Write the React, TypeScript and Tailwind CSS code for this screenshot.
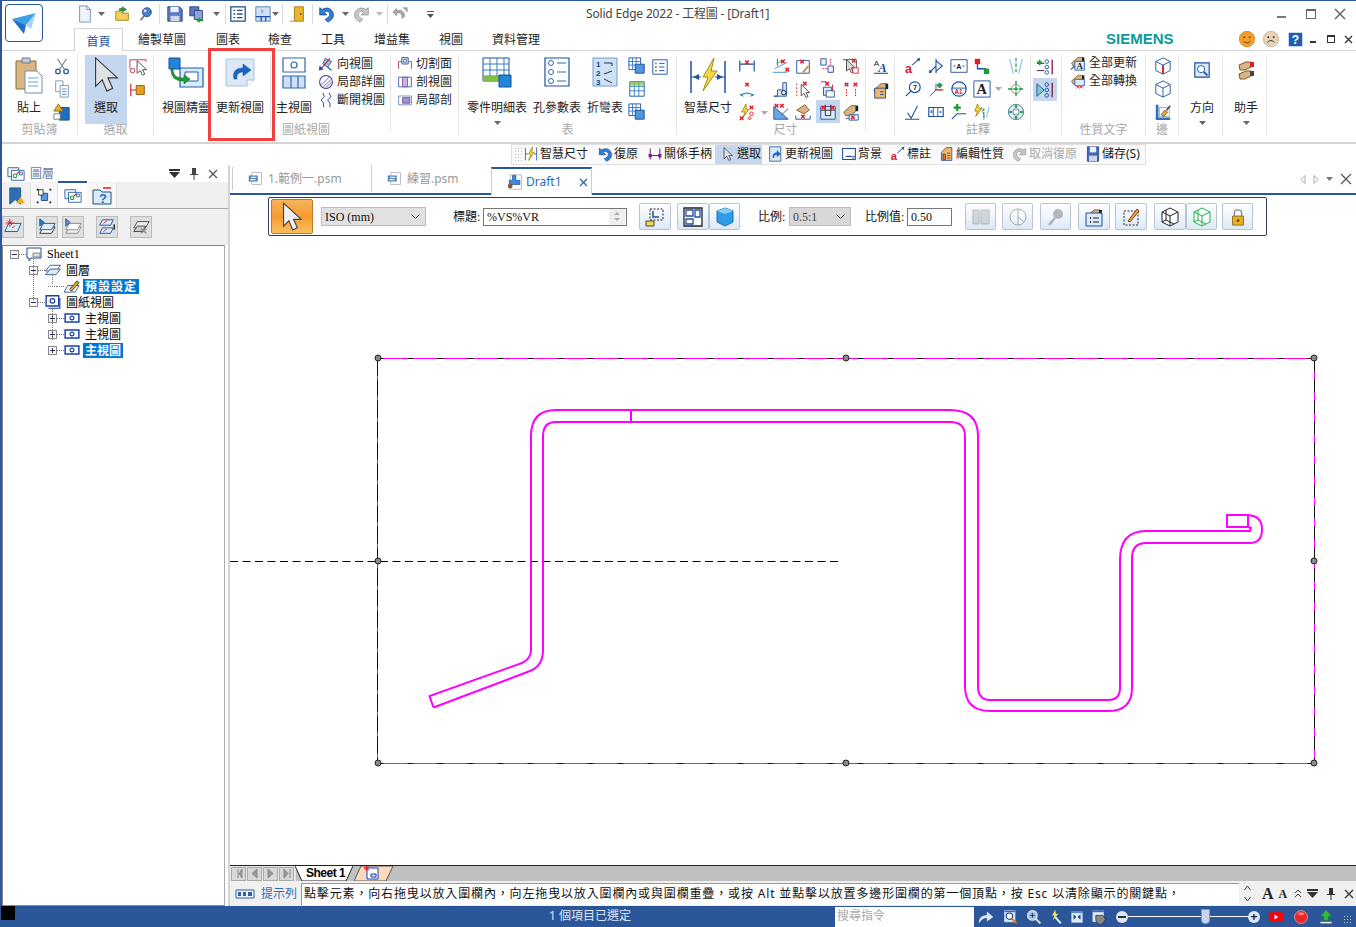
import React from 'react';

const B = '#1d4fa3';
const R = '#d8202a';
const G = '#1f9a3a';
const K = '#222';
const Y = '#e9b020';
const L = '#cfe2f5';
const T = '#d9b583';

const cursor = (x: number, y: number, k: number, fill = '#fff') => (
  <path transform={`translate(${x} ${y}) scale(${k})`} d="M0 0V14L3.5 11L6 16L8.5 15L6 10H10.5Z" fill={fill} stroke="#444" strokeWidth={1 / k} />
);
const hand = (
  <g>
    <path d="M2 10L10 3H16V9L9 14H4Z" fill={T} stroke="#7a5a2a" />
    <path d="M15 3h3v6h-3z" fill={K} />
  </g>
);
const redX = (x: number, y: number) => <path d={`M${x - 2} ${y - 2}l4 4m0-4l-4 4`} stroke={R} strokeWidth="1.6" fill="none" />;

const icons: Record<string, React.ReactNode> = {
  doc: <path d="M4 1H12L16 5V19H4Z M12 1V5H16" fill="#eef4fb" stroke="#6f8fb5" />,
  open: <g><path d="M2 7H7L9 9H16V17H2Z" fill="#f4cf5e" stroke="#a98518" /><path d="M9 2l5 3-5 3V6H6V4h3z" fill={G} stroke="#176b2a" strokeWidth=".6" /></g>,
  globe: <g><circle cx="11" cy="8" r="5" fill="#4c7fd0" stroke="#2a4f90" /><path d="M8 12L4 17" stroke="#777" strokeWidth="2" /><circle cx="9" cy="6.500" r="1.500" fill="#dbe7f7" /></g>,
  save: <g><path d="M2 2H15L18 5V18H2Z" fill="#5b78c2" stroke="#2c3f7f" /><path d="M5 2h9v6H5z" fill="#eef2fa" /><path d="M5 12h10v6H5z" fill="#cdd6ea" /></g>,
  saveAll: <g><path d="M2 2H12V12H2Z" fill="#5b78c2" stroke="#2c3f7f" /><path d="M7 6H16V16H7Z" fill="#8ea4d8" stroke="#2c3f7f" /><path d="M9 17l4-3v2h4v2h-4v2z" fill={G} /></g>,
  props: <g><path d="M2 2H18V18H2Z" fill="#fff" stroke="#24497f" strokeWidth="1.4" /><path d="M5 6h2M9 6h6M5 10h2M9 10h6M5 14h2M9 14h6" stroke="#24497f" strokeWidth="1.500" /></g>,
  book: <g><path d="M2 2H18V18H2Z" fill={L} stroke="#5a7ea8" /><path d="M2 13H18M8 13V18M13 13V18" stroke={B} strokeWidth="1.4" /><path d="M8 4l3 3-3 3z" fill="#9aa7b8" /></g>,
  door: <g><path d="M6 2H16V18H6Z" fill="#e8b52a" stroke="#a87a10" /><path d="M1 18H6" stroke="#888" /><circle cx="13" cy="10" r="1" fill="#744" /></g>,
  undo: <path d="M3 3V11H11L8 8C10 6 13 7 14 9C15 12 12 15 9 16L12 19C17 17 19 13 18 9C16 3 10 2 6 5Z" fill="#2f7fd6" stroke="#123f90" strokeWidth=".8" />,
  redo: <path d="M17 3V11H9L12 8C10 6 7 7 6 9C5 12 8 15 11 16L8 19C3 17 1 13 2 9C4 3 10 2 14 5Z" fill="#c8c8c8" stroke="#8a8a8a" strokeWidth=".8" />,
  revert: <path d="M6 4L2 8L6 12V9C10 8 13 10 12 15L15 13C16 8 12 5 6 6Z M13 3H18V8" fill="#aaa" stroke="#888" strokeWidth=".7" />,
  paste: <g><path d="M2 4H22V32H2Z" fill={T} stroke="#8a6a3a" /><path d="M8 1H16V6H8Z" fill="#c5ccd6" stroke="#778" /><path d="M11 14H23L28 19V36H11Z" fill="#fff" stroke="#6f8fb5" /><path d="M14 21h10M14 25h10M14 29h10" stroke="#6aa0dc" /></g>,
  cut: <g fill="none" stroke="#2f5f9e" strokeWidth="1.500"><circle cx="5.500" cy="16" r="2.500" /><circle cx="14.500" cy="16" r="2.500" /><path stroke="#8a97a8" d="M7 14L15 2M13 14L5 2" /></g>,
  copy: <g><path d="M3 1H11V13H3Z" fill="#fff" stroke="#6f8fb5" /><path d="M8 6H17V19H8Z" fill="#fff" stroke="#6f8fb5" /><path d="M10 10h5M10 13h5M10 16h5" stroke="#4c86c9" /></g>,
  fmt: <g><path d="M7 5H18V19H7Z" fill="#1f6fc0" stroke="#164e8f" /><path d="M1 9L6 1L11 9Z" fill={Y} stroke="#8a6a10" /><path d="M1 12H8V18H1Z" fill="#fff" stroke="#777" /></g>,
  arrowBig: <path d="M2 1V31L9 24L14 36L20 33L15 22H25Z" fill="#dfe3e8" stroke="#3c3c3c" strokeWidth="1.2" />,
  selBox: <g><path d="M1 2H19V4M1 2V12" fill="none" stroke={R} /><circle cx="4" cy="14" r="2.500" fill="#fff" stroke={R} />{cursor(9, 3, 1)}</g>,
  rel: <g><path d="M2 3V17M2 10H8" stroke={R} strokeWidth="1.300" /><path d="M8 5H17V15H8Z" fill="#e9a020" stroke="#8a5a10" /></g>,
  wizard: <g><path d="M12 11H35V30H12Z" fill="#dcebf8" stroke="#1f5fa8" strokeWidth="1.2" /><path d="M17 15H30V24H17Z" fill="#fff" stroke="#1f5fa8" /><path d="M1 1H12V12H1Z" fill="#1f86d8" stroke="#174e93" /><path d="M5 12C5 20 10 21 16 21V18L22 22L16 27V24C9 24 3 22 3 12Z" fill={G} stroke="#176b2a" strokeWidth=".6" /></g>,
  update: <g><path d="M1 2H29V23L22 29H1Z" fill="#dbe9f7" stroke="#a8c0da" /><path d="M22 29V23H29" fill="#fff" stroke="#a8c0da" /><path d="M9 22C7 14 12 11 18 11V7L26 13L18 19V15C14 15 11 17 12 22Z" fill="#1c63c9" stroke="#124a9a" strokeWidth=".5" /></g>,
  main: <g fill="#fff" stroke="#2f68b5" strokeWidth="1.2"><path d="M1 1H23V15H1Z" /><circle cx="12" cy="8" r="3" /><path d="M1 19H23V31H1Z" fill={L} /><path d="M9 19V31M16 19V31" /></g>,
  dirView: <g><path d="M9 3L17 7L12 14L6 10Z" fill="#9bbfe6" stroke={B} /><path d="M3 17L15 3" stroke={R} strokeWidth="1.300" /><path d="M2 12l-1 6 6-1z" fill={B} /><path d="M12 14l5 4" stroke={B} strokeWidth="1.500" /></g>,
  detail: <g><circle cx="10" cy="10" r="8" fill="#fff" stroke="#3d3d9e" strokeWidth="1.300" /><path d="M4 14L14 4M7 16L16 7M10 17L17 10" stroke="#3d3d9e" /></g>,
  breakV: <path d="M6 1L8 6L4 10L7 14M7 14V19M14 1L16 6L12 10L15 14M15 14V19" fill="none" stroke="#1d4fa3" strokeWidth="1.200" />,
  cutPlane: <g><path d="M2 7H18" stroke={R} /><path d="M2 7V16M18 7V16" stroke="#8b1f3f" /><path d="M6 2H14V10H6Z" fill={L} stroke={B} /><circle cx="10" cy="6" r="2" fill="#fff" stroke={B} /></g>,
  section: <g><path d="M2 4H18V16H2Z" fill="#fff" stroke={B} /><path d="M7 4H13V16H7Z" fill="#c9b6e6" stroke="#6a3aa0" /></g>,
  partial: <g><path d="M2 5H18V16H2Z" fill="#fff" stroke="#5a7ea8" /><path d="M7 7H16V14H7Z" fill="#a88fd8" stroke="#6a3aa0" /></g>,
  partsList: <g><path d="M1 1H27V24H1Z" fill="#fff" stroke={B} /><path d="M1 7H27M1 13H27M1 19H27M8 1V24M15 1V24M22 1V24" stroke="#2f7fc0" /><path d="M1 19H20V24H1Z" fill="#7cc04a" /><path d="M17 18H29V30H17Z" fill="#1f86d8" stroke="#174e93" /></g>,
  holeT: <g><path d="M1 1H25V29H1Z" fill="#fff" stroke={B} strokeWidth="1.200" /><g fill="none" stroke="#2f68b5"><circle cx="7" cy="6" r="2.500" /><circle cx="7" cy="15" r="2.500" /><circle cx="7" cy="24" r="2.500" /><path d="M13 6h9M13 15h9M13 24h9" /></g></g>,
  bendT: <g><path d="M1 1H25V29H1Z" fill={L} stroke="#6f9fcf" /><text x="4" y="10" fontSize="8" fontWeight="700" fill="#123f90" fontFamily="Liberation Sans">1</text><text x="4" y="19" fontSize="8" fontWeight="700" fill="#123f90" fontFamily="Liberation Sans">2</text><text x="4" y="28" fontSize="8" fontWeight="700" fill="#123f90" fontFamily="Liberation Sans">3</text><path d="M12 6h8v3M12 17l8-3M12 22l8 4" fill="none" stroke="#234" /></g>,
  grid: <g><path d="M2 2H18V18H2Z" fill="#fff" stroke={B} /><path d="M2 7H18M2 12H18M7 2V18M12 2V18" stroke="#2f7fc0" /><path d="M2 2H18V6H2Z" fill="#7cc04a" opacity=".7" /></g>,
  gridBlue: <g><path d="M1 1H14V14H1Z" fill="#fff" stroke={B} /><path d="M1 5H14M1 9H14M5 1V14M9 1V14" stroke="#2f7fc0" /><path d="M8 8H18V18H8Z" fill="#4c97dd" stroke="#174e93" /></g>,
  list: <g><path d="M2 2H18V18H2Z" fill="#fff" stroke={B} /><path d="M5 6h1M5 10h1M5 14h1" stroke={K} strokeWidth="2" /><path d="M9 6h6M9 10h6M9 14h6" stroke={B} /></g>,
  smart: <g><path d="M2 4V36M36 4V36" stroke={B} strokeWidth="1.500" /><path d="M2 20H12M26 20H36" stroke={B} /><path d="M10 17v6l-6-3zM28 17v6l6-3z" fill={B} /><path d="M25 1L14 20H19L14 34L28 14H22Z" fill="#f3d84a" stroke="#a88a10" /></g>,
  dim1: <g><path d="M2 4V16M18 4V16M2 8H18" stroke={B} strokeWidth="1.300" />{redX(10, 6)}</g>,
  dim2: <g><path d="M3 17A12 12 0 0 1 17 17" fill="none" stroke="#3f8fcf" strokeWidth="1.300" /><path d="M2 16l4 2M18 16l-4 2" stroke={B} />{redX(10, 5)}</g>,
  dim3: <g><path d="M6 2v8" stroke="#555" /><path d="M5 7L15 3" stroke="#3fa06f" /><path d="M1 17H17M3 13L17 6" stroke="#3f8fcf" />{redX(12, 5)}{redX(17, 14)}</g>,
  dim4: <g><path d="M3 4H17V18H3Z" fill="#fff" stroke={B} />{redX(9, 5)}<path d="M10 17L16 10" stroke="#c88a20" strokeWidth="2" /></g>,
  dim5: <g><path d="M2 2H8V9H2Z M10 10H16V17H10Z" fill="#eef4fb" stroke={B} /><path d="M13 2V9M9 13H3" stroke={R} strokeDasharray="2 1" /></g>,
  dim6: <g><path d="M1 3h15v14" fill="none" stroke="#444" />{cursor(5, 3, .9, '#ddd')}{redX(13, 4)}<path d="M12 12h6v6h-6z" fill="#fff" stroke={R} /></g>,
  dim7: <g><path d="M2 18H6V11H12V3H16V18Z" fill="#d7e5f5" stroke={B} /><circle cx="13" cy="14" r="2.500" fill="none" stroke="#123" /></g>,
  dim8: <g><path d="M3 4V18" stroke={R} strokeDasharray="2 2" />{redX(12, 4)}{cursor(8, 5, .9)}</g>,
  dim9: <g><path d="M2 2h6M15 5v8" stroke={R} /><path d="M5 8H14V17H5Z" fill="#dcebf8" stroke={B} /><path d="M8 12H17V19H8Z" fill="#fff" stroke={B} />{redX(9, 4)}</g>,
  dim10: <g>{redX(5, 5)}{redX(15, 5)}<path d="M5 10v8M15 10v8" stroke={R} strokeDasharray="2 1" /></g>,
  dim11: <g><path d="M9 1L4 10H8L5 17L12 7H9Z" fill="#f3d84a" stroke="#a88a10" />{redX(15, 5)}{redX(4, 17)}<circle cx="15" cy="12" r="2" fill="none" stroke={R} /><circle cx="13" cy="17" r="1.500" fill="none" stroke={R} /></g>,
  dim12: <g><path d="M2 4L18 18H2Z" fill="#6aa9e0" stroke={B} />{redX(5, 3)}{redX(11, 3)}<path d="M18 6L11 13" stroke={B} /></g>,
  dim13: <g><path d="M3 8L12 2L17 8L11 12Z" fill={T} stroke="#7a5a2a" /><path d="M2 18H18M2 14V18M18 14V18" stroke={B} />{redX(10, 15)}</g>,
  dim14: <g><path d="M2 4H18V18H2Z" fill="#dcebf8" stroke={B} /><path d="M2 8H18M7 2V14M13 2V14M7 14H13" stroke={K} />{redX(5, 5)}{redX(15, 5)}</g>,
  dim15: <g>{hand}<path d="M4 17H18" stroke={B} /><path d="M8 13h10v6H8z" fill="#fff" stroke={B} />{redX(12, 16)}</g>,
  aStyle: <g><text x="2" y="9" fontSize="9" fill={K} fontFamily="Liberation Sans">A</text><text x="7" y="15" fontSize="14" fontStyle="italic" fontWeight="700" fill={B} fontFamily="Liberation Serif">A</text><path d="M2 17H18" stroke={B} strokeWidth="1.200" /></g>,
  propDoc: <g>{hand}<path d="M3 8H15V19H3Z" fill="#f2b766" stroke={B} /><path d="M9 12h4M9 15h4" stroke={B} /></g>,
  leader: <g><text x="1" y="18" fontSize="14" fontWeight="700" fill={R} fontFamily="Liberation Sans">a</text><path d="M9 9L17 2" stroke={B} strokeWidth="1.200" /><path d="M18 1l-1 4-3-3z" fill={B} /></g>,
  dimArrow: <g><path d="M3 17L10 10M10 2V18M10 4L17 10L10 16" fill="none" stroke={B} strokeWidth="1.200" /><path d="M2 18l1-4 3 3z" fill={B} /></g>,
  box: <g><path d="M1 3H19V17H1Z" fill="#fff" stroke={B} /><path d="M4 10h2M14 10h2" stroke={K} /><text x="7" y="13" fontSize="8" fontWeight="700" fill={K} fontFamily="Liberation Sans">A</text></g>,
  jog: <g><path d="M5 5V13H14V18" fill="none" stroke={B} strokeWidth="1.500" /><path d="M2 2H8V8H2Z" fill={R} /><path d="M12 13H18V19H12Z" fill={G} /></g>,
  centerLine: <g><path d="M3 2L7 18M17 2L13 18" stroke="#5fb0e0" /><path d="M10 1V19" stroke={G} strokeDasharray="4 2" strokeWidth="1.300" /></g>,
  balloon: <g><circle cx="12" cy="8" r="6" fill="#fff" stroke={B} strokeWidth="1.300" /><text x="10" y="11" fontSize="8" fontWeight="700" fill={K} fontFamily="Liberation Sans">7</text><path d="M8 12L2 18" stroke={B} strokeWidth="1.300" /></g>,
  weld: <g><path d="M3 18L10 11V4" fill="none" stroke={B} /><path d="M11 6H17M14 3V9" stroke={G} strokeWidth="2.500" /><path d="M9 11H18" stroke={R} strokeWidth="1.500" /></g>,
  symbol: <g><circle cx="10" cy="10" r="8" fill="#fff" stroke={B} strokeWidth="1.300" /><path d="M2 9H18" stroke={B} /><text x="5" y="16" fontSize="7" fontWeight="700" fill={R} fontFamily="Liberation Sans">A1</text></g>,
  bigA: <g><path d="M1 1H19V19H1Z" fill="#fff" stroke={B} /><text x="4" y="16" fontSize="16" fontWeight="700" fill={K} fontFamily="Liberation Serif">A</text></g>,
  target: <g><circle cx="10" cy="10" r="5" fill="#fff" stroke="#888" /><path d="M10 1V19M1 10H19" stroke={G} strokeWidth="1.500" strokeDasharray="5 1" /></g>,
  surface: <g><path d="M1 18H17M4 11L8 17L15 3" fill="none" stroke={B} strokeWidth="1.200" /></g>,
  frame: <g><path d="M2 5H18V15H2Z" fill="#fff" stroke={B} strokeWidth="1.300" /><path d="M7 5V15M12 5V15" stroke={B} /><path d="M4 8h2v3H4zM14 9h2v2h-2z" fill="#3f6fc0" /></g>,
  addLine: <g><path d="M2 18L8 12H18" fill="none" stroke={B} strokeWidth="1.200" /><path d="M8 1V9M4 5H12" stroke={G} strokeWidth="2.500" /></g>,
  boltC: <g><path d="M5 1L2 9H5L3 15L10 6H7Z" fill="#f3d84a" stroke="#a88a10" /><path d="M9 4L13 16M18 4L15 16" stroke="#5fb0e0" /><path d="M12 6V19" stroke={G} strokeDasharray="3 1" strokeWidth="1.300" /></g>,
  circles: <g><circle cx="10" cy="10" r="8.500" fill="#dcebf8" stroke="#3f6f90" /><circle cx="10" cy="10" r="3.500" fill="#fff" stroke="#3f6f90" /><circle cx="10" cy="4" r="1.500" fill={G} /><circle cx="10" cy="16" r="1.500" fill={G} /><circle cx="4" cy="10" r="1.500" fill={G} /><circle cx="16" cy="10" r="1.500" fill={G} /></g>,
  tree1: <g><path d="M1 6h8M1 14h8" stroke={K} /><path d="M4 2V8M1 5H7" stroke={G} strokeWidth="2" /><circle cx="12" cy="4" r="2" fill="none" stroke={B} /><circle cx="12" cy="10" r="2" fill="none" stroke={B} /><circle cx="12" cy="16" r="2" fill="none" stroke={B} /><path d="M18 2V18" stroke="#8b1f3f" strokeWidth="1.500" /></g>,
  tree2: <g><path d="M1 3V17L9 10Z" fill="#7fd0c0" stroke={B} /><circle cx="12" cy="4" r="2" fill="none" stroke={B} /><circle cx="12" cy="10" r="2" fill="none" stroke={B} /><circle cx="12" cy="16" r="2" fill="none" stroke={B} /><path d="M18 2V18" stroke="#8b1f3f" strokeWidth="1.500" /></g>,
  updAll: <g>{hand}<path d="M6 8H18V19H6Z" fill="#dcebf8" stroke={B} /><text x="8" y="18" fontSize="11" fontWeight="700" fill={K} fontFamily="Liberation Serif">A</text><path d="M1 18L6 14" stroke={B} strokeWidth="1.500" /></g>,
  convAll: <g>{hand}<path d="M6 8H18V16H6Z" fill="#dcebf8" stroke={B} /><path d="M8 16l4 3m0-3l-4 3M12 16l4 3m0-3l-4 3" stroke={R} /></g>,
  cubeRed: <g><path d="M10 1L18 5V15L10 19L2 15V5Z M2 5L10 9L18 5M10 9V19" fill="#fff" stroke={B} /><path d="M10 9V19" stroke={R} strokeWidth="2" /></g>,
  cube: <path d="M10 1L18 5V15L10 19L2 15V5Z M2 5L10 9L18 5M10 9V19" fill="#fff" stroke={B} />,
  brush: <g><path d="M2 2H5V16H18V19H2Z" fill="#2f6fc0" /><path d="M6 5H17V15H6Z" fill="#fff" stroke="#9ab" /><path d="M8 13L12 8L15 10L11 15Z" fill={Y} stroke="#845" /><path d="M14 8L18 3" stroke="#456" strokeWidth="2" /></g>,
  dirZoom: <g><path d="M2 2H18V18H2Z" fill="#dcebf8" stroke={B} strokeWidth="1.300" /><circle cx="9" cy="9" r="4" fill="#fff" stroke={B} /><path d="M12 12L16 16" stroke={B} strokeWidth="2" /></g>,
  helper: <g><path d="M3 5L10 2H15V7L9 10H4Z" fill={T} stroke="#7a5a2a" /><path d="M14 2h4v5h-4z" fill={R} /><path d="M3 14L10 11H15V16L9 19H4Z" fill={T} stroke="#7a5a2a" /><path d="M14 11h4v5h-4z" fill="#444" /></g>,
  layers: <g><path d="M1 3H13V13H1Z" fill="#eef4fb" stroke="#2f5f9e" /><path d="M5 6H19V17H5Z" fill="#fff" stroke="#2f5f9e" /><circle cx="9" cy="12" r="2" fill="none" stroke={G} strokeWidth="1.300" /><path d="M11 10L14 7" stroke={R} strokeWidth="1.300" /><path d="M14 8h3v3h-3z" fill="none" stroke="#2f5f9e" /></g>,
  tabPath: <g><path d="M2 1H14V19L8 14L2 19Z" fill="#2f6fb0" stroke="#1c4f80" /><path d="M9 18L14 11L19 18Z" fill={Y} /></g>,
  tabFeat: <g><path d="M7 7H14V15H7Z" fill="#5d9bd8" stroke="#174e93" /><path d="M4 3H9V9H4Z" fill="#fff" stroke="#333" /><path d="M2 2h2v2H2zM16 2h2v2h-2zM2 16h2v2H2zM16 16h2v2h-2z" fill="#222" /></g>,
  tabHelp: <g><path d="M1 4H8L10 6H19V18H1Z" fill="#dcebf8" stroke="#1c4f80" /><text x="7" y="17" fontSize="13" fontWeight="700" fill="#2070c0" fontFamily="Liberation Sans">?</text><path d="M11 2H19" stroke={R} strokeWidth="1.500" /></g>,
  lay1: <g><path d="M5 6H19L15 15H1Z" fill="#dcebf8" stroke={B} /><path d="M4 3l5 5m0-5L4 8M6.500 1V10M2 5.500H11" stroke={R} /><path d="M9 11l3-2" stroke={R} /></g>,
  lay2: <g><path d="M6 10H19L15 17H2Z" fill="#fff" stroke={K} /><path d="M6 6H19L15 13H2Z" fill="#dcebf8" stroke={B} /><path d="M2 1V9L7 5Z" fill="#1f80c0" stroke={B} /></g>,
  lay3: <g><path d="M6 10H19L15 17H2Z" fill="#eee" stroke="#888" /><path d="M6 6H19L15 13H2Z" fill="#fff" stroke="#888" /><path d="M2 1V9L7 5Z" fill="#6a90c0" stroke={B} /></g>,
  lay4: <g><path d="M5 2H17L14 8H2Z M5 11H17L14 17H2Z" fill="#dcebf8" stroke={B} /><path d="M6 6l4-3M6 15l4-3" stroke={R} /><path d="M18 7V13" stroke={K} strokeWidth="1.500" /></g>,
  lay5: <g><path d="M6 4H19L15 11H2Z" fill="#eee" stroke="#444" /><path d="M6 9H15L12 15H2Z" fill="#ccc" stroke="#444" /><path d="M10 12l6 5m0-5l-6 5" stroke="#888" strokeWidth="1.500" /></g>,
  sheet: <g><path d="M1 2H15V12H5L3 15V12H1Z" fill="#fff" stroke={B} /><path d="M7 7H14V11H7Z" fill="#ddd" stroke="#888" /></g>,
  layerNode: <g><path d="M5 1H16L11 7H0Z" fill="#fff" stroke="#2f5f9e" /><path d="M5 5H16L11 11H0Z" fill="#dcebf8" stroke="#2f5f9e" /></g>,
  pencil: <g><path d="M4 7H16L12 14H0Z" fill="#fff" stroke="#2f5f9e" /><path d="M6 11L14 2L16 4L8 13Z" fill={Y} stroke="#333" /></g>,
  views: <g><path d="M1 1H12V10H1Z" fill="#fff" stroke="#1d3fa3" strokeWidth="1.200" /><circle cx="6.500" cy="5.500" r="2" fill="none" stroke="#1d3fa3" /><path d="M13 3V12H3" fill="none" stroke="#1d3fa3" /></g>,
  viewNode: <g><path d="M1 1H13V8H1Z" fill="#fff" stroke="#1d3fa3" strokeWidth="1.300" /><circle cx="7" cy="4.500" r="1.700" fill="none" stroke="#1d3fa3" /></g>,
  psm1: <g><path d="M5 2H18V18H5Z" fill="#fff" stroke="#aab" /><path d="M1 6H13V14H1Z" fill="#4f7fb8" /><path d="M4 8.500H11M3 11.500H10" stroke="#fff" strokeWidth="1.500" /></g>,
  draft: <g><path d="M4 1H18V19H4Z" fill="#fff" stroke="#aab" /><path d="M7 2H11V8H16V13H3V8H7Z" fill="#3f8fd8" stroke={B} /><circle cx="4" cy="15" r="3" fill="#8a5a2a" /></g>,
  title: <g><path d="M5 2H18V13H5Z" fill="none" stroke={K} strokeDasharray="2 1.500" /><path d="M8 4V10H14" fill="none" stroke={B} strokeWidth="1.500" /><path d="M1 14H9V19H1Z" fill="#f3d84a" stroke="#444" /></g>,
  vLayout: <g><path d="M1 1H19V19H1Z" fill="#fff" stroke={K} strokeWidth="1.300" /><path d="M3 3H10V9H3ZM12 3H17V10H12ZM3 12H10V17H3Z" fill="#fff" stroke={B} strokeWidth="1.300" /></g>,
  blueCube: <g><path d="M10 1L18 4V15L10 19L2 15V4Z" fill="#2f9be8" stroke="#1c6fb8" /><path d="M2 4L10 7L18 4L10 1Z" fill="#8ad0f5" /></g>,
  gMove: <g opacity=".4"><path d="M2 3H8V17H2Z M10 3H18V17H10Z" fill="#aaa" stroke="#666" /></g>,
  gDial: <g opacity=".45"><circle cx="10" cy="10" r="8" fill="#fff" stroke="#555" /><path d="M10 2V18M10 10L16 15" stroke="#555" /></g>,
  gMag: <g opacity=".5"><circle cx="12" cy="7" r="5" fill="#777" /><path d="M9 11L3 18" stroke="#777" strokeWidth="2.500" /></g>,
  handList: <g>{hand}<path d="M2 6H18V19H2Z" fill="#dcebf8" stroke={B} /><path d="M6 11h1M6 15h1" stroke={K} strokeWidth="2" /><path d="M9 11h6M9 15h6" stroke={K} /></g>,
  editBox: <g><path d="M3 4H17V18H3Z" fill="none" stroke={K} strokeDasharray="2 1.500" /><path d="M7 14L16 2L18 4L9 15Z" fill={Y} stroke="#833" /></g>,
  wire: <path d="M10 1L18 5V15L10 19L2 15V5Z M2 5L10 9L18 5M10 9V19 M6 3V13L2 15M6 13L14 17" fill="#fff" stroke={K} />,
  wireG: <path d="M10 1L18 5V15L10 19L2 15V5Z M2 5L10 9L18 5M10 9V19 M6 3V13L2 15M6 13L14 17" fill="#fff" stroke="#22b04a" />,
  lock: <g><path d="M6 9V5C6 1 14 1 14 5V9" fill="none" stroke="#888" strokeWidth="1.500" /><path d="M4 9H16V19H4Z" fill="#e9b020" stroke="#8a6a10" /><circle cx="10" cy="14" r="1.500" fill="#532" /></g>,
  tagSmart: <g><path d="M3 2V18M17 2V18M3 10H6M14 10H17" stroke={B} /><path d="M12 1L7 10H10L7 18L14 8H11Z" fill="#f3d84a" stroke="#a88a10" /></g>,
  handle: <g><path d="M4 3V17M16 3V17M4 12H16" stroke="#7a1f8a" strokeWidth="1.300" /><path d="M2 10h4v4H2zM14 10h4v4h-4z" fill="#7a1f8a" /></g>,
  arrowSm: cursor(5, 2, 1, '#dfe3e8'),
  updSm: <g><path d="M2 1H16V19H2Z" fill="#dbe9f7" stroke="#1d4fa3" /><path d="M6 15C5 10 8 8 11 8V5L16 10L11 14V11C9 11 7 12 8 15Z" fill="#1c63c9" /></g>,
  bg: <g><path d="M2 3H18V17H2Z" fill="#fff" stroke={B} strokeWidth="1.300" /><path d="M6 13h8" stroke={B} strokeWidth="1.500" /><path d="M15 13h3v4h-3z" fill="#ddd" stroke={B} /></g>,
  props2: <g><path d="M3 8L9 2H16V18H3Z" fill="#f2b766" stroke={B} /><path d="M10 9h4M10 12h4M10 15h4M5 10h3v7H5z" stroke={B} fill="#e87020" /></g>,
  saveV: <g><path d="M3 1H17V19H3Z" fill="#3f67b8" stroke="#2c3f7f" /><path d="M6 1H14V8H6Z" fill="#eef2fa" /><path d="M5 12H15V19H5Z" fill="#cdd6ea" /></g>,
  keyb: <g><path d="M1 6H19V14H1Z" fill="#eef4fb" stroke="#2f5f9e" /><path d="M3 8h3v4H3zM8 8h3v4H8zM13 8h4v4h-4z" fill="#2f5f9e" /></g>,
  zoomF: <g><path d="M2 2H15V16H2Z" fill="#dcebf8" stroke="#c5d8ee" /><path d="M2 2H15V4H2Z" fill="#2f6fc0" /><circle cx="8" cy="9" r="4" fill="#fff" stroke="#123f90" strokeWidth="1.400" /><path d="M11 12L17 18" stroke="#e07a20" strokeWidth="2" /></g>,
  zoomP: <g><circle cx="8" cy="8" r="6" fill="#9dc0ee" stroke="#dbe9f7" strokeWidth="1.500" /><path d="M8 5V11M5 8H11" stroke="#123" /><path d="M12 12L18 18" stroke="#dbe9f7" strokeWidth="2.500" /></g>,
  wand: <g><path d="M9 1L5 8H8L6 14L13 6H10Z" fill="#f3e04a" /><path d="M9 10L16 18" stroke="#dbe9f7" strokeWidth="2.500" /></g>,
  fit: <g><path d="M2 2H18V18H2Z" fill="#dcebf8" /><path d="M2 2H18V4H2Z" fill="#2f6fc0" /><path d="M5 6l4 4-4 4zM15 6l-4 4 4 4z" fill="#123f90" /></g>,
  panH: <g><path d="M2 2H16V16H2Z" fill="#dcebf8" /><path d="M2 2H16V4H2Z" fill="#2f6fc0" /><path d="M6 8H15L18 13L14 19H9L6 14Z" fill="#888" stroke="#333" /></g>,
  share: <path d="M2 17C2 10 6 8 11 8V4L18 10L11 15V11C7 11 5 13 2 17Z" fill="#dce9f8" />,
  yt: <g><rect x="1" y="4" width="18" height="12" rx="3" fill="#f00" /><path d="M8 7l5 3-5 3z" fill="#fff" /></g>,
  rec: <g><circle cx="10" cy="10" r="8" fill="#e8262a" stroke="#f0a0a0" /><ellipse cx="10" cy="6" rx="4" ry="2" fill="#f47a7a" /></g>,
  up: <g><path d="M10 1L17 9H13V14H7V9H3Z" fill="#38b838" stroke="#1a7a1a" strokeWidth=".6" /><path d="M3 17H17" stroke="#e8e8e8" strokeWidth="2" /></g>,
  smile: <g><circle cx="10" cy="10" r="8.500" fill="#f2a02c" stroke="#d98a1a" /><circle cx="7" cy="8" r="1" fill="#6a3a0a" /><circle cx="13" cy="8" r="1" fill="#6a3a0a" /><path d="M6 12C8 15 12 15 14 12" fill="none" stroke="#6a3a0a" /></g>,
  sad: <g><circle cx="10" cy="10" r="8.500" fill="#e6d4b8" stroke="#cdb898" /><circle cx="7" cy="8" r="1" fill="#3a2a1a" /><circle cx="13" cy="8" r="1" fill="#3a2a1a" /><path d="M6 14C8 11 12 11 14 14" fill="none" stroke="#3a2a1a" /></g>,
  help: <g><rect x="1" y="1" width="18" height="18" fill="#1f5fae" /><text x="5" y="16" fontSize="16" fontWeight="700" fill="#fff" fontFamily="Liberation Sans">?</text></g>,
};

function Ic({ n, s = 16, h }: { n: string; s?: number; h?: number }) {
  const vb: Record<string, string> = {
    paste: '0 0 30 38', wizard: '0 0 36 32', update: '0 0 30 30', main: '0 0 24 32', partsList: '0 0 30 31',
    holeT: '0 0 26 30', bendT: '0 0 26 30', smart: '0 0 38 38', arrowBig: '0 0 26 38',
    viewNode: '0 -1.500 14 12', views: '0 0 14 13', layerNode: '-0.500 0 17 12', sheet: '0 0 16 16', pencil: '0 0 17 15',
  };
  return (
    <svg width={s} height={h ?? s} viewBox={vb[n] ?? '0 0 20 20'} className="block shrink-0">
      {icons[n]}
    </svg>
  );
}

const Dd = ({ c = '#666' }: { c?: string }) => (
  <svg width="7" height="4" viewBox="0 0 7 4" className="block shrink-0"><path d="M0 0H7L3.500 4Z" fill={c} /></svg>
);

function Large({ w, icon, label, s, h, dd, cls = '', ip = 'pt-[2px]' }: { w: string; icon: string; label: string; s: number; h?: number; dd?: boolean; cls?: string; ip?: string }) {
  return (
    <div className={`flex flex-col items-center shrink-0 h-[68px] ${w} ${cls}`}>
      <div className={`h-[45px] shrink-0 flex justify-center ${ip}`}><Ic n={icon} s={s} h={h} /></div>
      <div className="h-[16px] shrink-0 leading-[16px] whitespace-nowrap">{label}</div>
      {dd && <div className="mt-[5px] shrink-0"><Dd /></div>}
    </div>
  );
}

function Col({ w, items, cls = '' }: { w: string; items: (string | null)[]; cls?: string }) {
  return (
    <div className={`flex flex-col shrink-0 ${w} ${cls}`}>
      {items.map((n, i) => (
        <div key={i} className="h-[23px] flex items-center justify-center">{n && <Ic n={n} s={18} />}</div>
      ))}
    </div>
  );
}

function TextRows({ items, cls = '' }: { items: [string, string][]; cls?: string }) {
  return (
    <div className={`flex flex-col shrink-0 ${cls}`}>
      {items.map(([n, t]) => (
        <div key={t} className="h-[18px] flex items-center gap-[3px] whitespace-nowrap leading-[18px]"><Ic n={n} />{t}</div>
      ))}
    </div>
  );
}

function Group({ w, label, children }: { w: string; label?: string; children: React.ReactNode }) {
  return (
    <div className={`flex flex-col shrink-0 h-[80px] border-r border-[#e4e4e4] ${w}`}>
      <div className="flex h-[68px] relative">{children}</div>
      <div className="h-[12px] leading-[14px] text-center text-[#a8a8a8]">{label}</div>
    </div>
  );
}

const VSep = ({ cls = '' }: { cls?: string }) => <div className={`w-px h-[76px] bg-[#e4e4e4] shrink-0 ${cls}`} />;

function Ribbon() {
  return (
    <div className="h-[93px] pt-[4px] flex border-b-2 border-[#d4d4d4] text-[12px] text-[#222] bg-white">
      <Group w="w-[76px]" label="剪貼簿">
        <Large w="w-[30px]" cls="ml-[12px]" icon="paste" label="貼上" s={30} h={38} />
        <Col w="w-[16px]" cls="ml-[10px]" items={['cut', 'copy', 'fmt']} />
      </Group>
      <Group w="w-[76px]" label="選取">
        <Large w="w-[42px]" cls="ml-[7px] bg-[#c5d6ef] h-[69px]" icon="arrowBig" label="選取" s={26} h={36} />
        <Col w="w-[18px]" cls="ml-[2px]" items={['selBox', 'rel']} />
      </Group>
      <Group w="w-[305px]" label="圖紙視圖">
        <Large w="w-[48px]" cls="ml-[8px]" icon="wizard" label="視圖精靈" s={36} h={32} />
        <Large w="w-[52px]" cls="ml-[4px]" icon="update" label="更新視圖" s={30} />
        <VSep cls="ml-[4px]" />
        <Large w="w-[38px]" cls="ml-[4px]" icon="main" label="主視圖" s={24} h={32} />
        <TextRows cls="ml-[5px] w-[72px]" items={[['dirView', '向視圖'], ['detail', '局部詳圖'], ['breakV', '斷開視圖']]} />
        <VSep />
        <TextRows cls="ml-[6px]" items={[['cutPlane', '切割面'], ['section', '剖視圖'], ['partial', '局部剖']]} />
      </Group>
      <Group w="w-[218px]" label="表">
        <Large w="w-[62px]" cls="ml-[7px]" icon="partsList" label="零件明細表" s={30} h={31} dd />
        <Large w="w-[50px]" cls="ml-[4px]" icon="holeT" label="孔參數表" s={26} h={30} />
        <Large w="w-[38px]" cls="ml-[4px]" icon="bendT" label="折彎表" s={26} h={30} />
        <Col w="w-[16px]" cls="ml-[5px]" items={['gridBlue', 'grid', 'gridBlue']} />
        <Col w="w-[16px]" cls="ml-[7px]" items={['list']} />
      </Group>
      <Group w="w-[218px]" label="尺寸">
        <Large w="w-[50px]" cls="ml-[6px]" icon="smart" label="智慧尺寸" s={38} />
        <Col w="w-[22px]" cls="ml-[3px]" items={['dim1', 'dim2', 'dim11']} />
        <div className="w-[12px] shrink-0 h-[69px] flex justify-center pt-[56px]"><Dd c="#aaa" /></div>
        <Col w="w-[22px]" items={['dim3', 'dim7', 'dim12']} />
        <Col w="w-[22px]" items={['dim4', 'dim8', 'dim13']} />
        <div className="w-[24px] shrink-0 ml-[2px] flex flex-col">
          <div className="h-[23px] flex items-center justify-center"><Ic n="dim5" s={18} /></div>
          <div className="h-[23px] flex items-center justify-center"><Ic n="dim9" s={18} /></div>
          <div className="h-[23px] flex items-center justify-center bg-[#c5d6ef]"><Ic n="dim14" s={18} /></div>
        </div>
        <Col w="w-[22px]" items={['dim6', 'dim10', 'dim15']} />
        <VSep cls="ml-[3px]" />
        <Col w="w-[29px]" items={['aStyle', 'propDoc']} />
      </Group>
      <Group w="w-[167px]" label="註釋">
        <Col w="w-[23px]" cls="ml-[6px]" items={['leader', 'balloon', 'surface']} />
        <Col w="w-[23px]" items={['dimArrow', 'weld', 'frame']} />
        <Col w="w-[23px]" items={['box', 'symbol', 'addLine']} />
        <Col w="w-[23px]" items={['jog', 'bigA', 'boltC']} />
        <div className="w-[11px] shrink-0 flex justify-center pt-[32px]"><Dd c="#aaa" /></div>
        <Col w="w-[23px]" items={['centerLine', 'target', 'circles']} />
        <VSep cls="ml-[3px]" />
        <div className="flex flex-col w-[24px] ml-[2px] shrink-0">
          <div className="h-[23px] flex items-center justify-center"><Ic n="tree1" s={18} /></div>
          <div className="h-[23px] flex items-center justify-center bg-[#c5d6ef]"><Ic n="tree2" s={18} /></div>
        </div>
      </Group>
      <Group w="w-[84px]" label="性質文字">
        <TextRows cls="ml-[8px] -mt-[1px]" items={[['updAll', '全部更新'], ['convAll', '全部轉換']]} />
      </Group>
      <Group w="w-[33px]" label="邊">
        <Col w="w-[33px]" items={['cubeRed', 'cube', 'brush']} />
      </Group>
      <Group w="w-[44px]">
        <Large w="w-[42px]" cls="ml-[2px]" icon="dirZoom" label="方向" s={18} dd ip="pt-[6px]" />
      </Group>
      <Group w="w-[44px]">
        <Large w="w-[42px]" cls="ml-[2px]" icon="helper" label="助手" s={20} dd ip="pt-[5px]" />
      </Group>
    </div>
  );
}

const quick: { w: string; n?: string; dd?: boolean; sep?: boolean; c?: string }[] = [
  { w: 'w-[16px]', n: 'doc' }, { w: 'w-[16px]', dd: true }, { w: 'w-[28px]', n: 'open' }, { w: 'w-[18px]', n: 'globe' }, { w: 'w-[8px]', sep: true },
  { w: 'w-[24px]', n: 'save' }, { w: 'w-[20px]', n: 'saveAll' }, { w: 'w-[18px]', dd: true }, { w: 'w-px', sep: true },
  { w: 'w-[24px]', n: 'props' }, { w: 'w-[4px]' }, { w: 'w-[18px]', n: 'book' }, { w: 'w-[6px]', dd: true }, { w: 'w-[8px]', sep: true },
  { w: 'w-[24px]', n: 'door' }, { w: 'w-[4px]', sep: true }, { w: 'w-[24px]', n: 'undo' }, { w: 'w-[14px]', dd: true },
  { w: 'w-[20px]', n: 'redo' }, { w: 'w-[14px]', dd: true, c: '#bbb' }, { w: 'w-[2px]', sep: true }, { w: 'w-[24px]', n: 'revert' },
];

const ribbonTabs = [
  { t: '首頁', w: 'w-[49px]', on: true },
  { t: '繪製草圖', w: 'w-[78px]' },
  { t: '圖表', w: 'w-[54px]' },
  { t: '檢查', w: 'w-[50px]' },
  { t: '工具', w: 'w-[56px]' },
  { t: '增益集', w: 'w-[62px]' },
  { t: '視圖', w: 'w-[56px]' },
  { t: '資料管理', w: 'w-[74px]' },
];

function Header() {
  return (
    <div className="flex h-[50px] border-b border-[#d4d4d4] bg-white shrink-0">
      <div className="w-[72px] shrink-0 pl-[3px] pt-[3px]">
        <div className="w-[38px] h-[38px] rounded-[4px] border border-[#2b579a] flex items-center justify-center">
          <svg width="26" height="24" viewBox="0 0 26 24">
            <path d="M1 8L25 2L15 14Z" fill="#3aa0e8" />
            <path d="M1 8L15 14L13 23Z" fill="#1f6fc8" />
            <path d="M15 14L25 2L20 18Z" fill="#a8d4f5" />
          </svg>
        </div>
      </div>
      <div className="flex-1 flex flex-col">
        <div className="h-[26px] flex items-center text-[12px] text-[#444]">
          <div className="w-[512px] shrink-0 flex items-center pl-[3px]">
            {quick.map((q, i) => (
              <div key={i} className={`h-[22px] shrink-0 flex items-center justify-center ${q.w}`}>
                {q.n && <Ic n={q.n} s={18} />}
                {q.dd && <Dd c={q.c ?? '#666'} />}
                {q.sep && <div className="w-px h-[20px] shrink-0 bg-[#dcdcdc]" />}
              </div>
            ))}
            <div className="ml-[15px] flex flex-col items-center gap-[2px]">
              <div className="w-[7px] h-px bg-[#555]" />
              <Dd c="#555" />
            </div>
          </div>
          <div className="whitespace-nowrap tracking-[-0.18px]">Solid Edge 2022 - 工程圖 - [Draft1]</div>
          <div className="ml-auto flex items-center text-[#666]">
            <div className="w-[9px] h-[2px] bg-[#777] mt-[6px] mr-[20px]" />
            <div className="w-[10px] h-[10px] border border-[#666] border-t-2 mr-[18px]" />
            <svg width="12" height="12" viewBox="0 0 12 12" className="mr-[10px]"><path d="M1 1L11 11M11 1L1 11" stroke="#666" strokeWidth="1.500" /></svg>
          </div>
        </div>
        <div className="h-[23px] flex text-[12px] text-[#222]">
          {ribbonTabs.map(t => (
            <div key={t.t} className={`shrink-0 text-center leading-[25px] ${t.w} ${t.on ? 'relative top-px h-[23px] bg-white border border-b-0 border-[#d4d4d4] text-[#1f4f9c]' : ''}`}>{t.t}</div>
          ))}
          <div className="ml-[553px] w-[71px] font-bold text-[15px] leading-[24px] text-[#0b9b9b] [font-family:'Liberation_Sans',sans-serif] whitespace-nowrap">SIEMENS</div>
          <div className="ml-[61px] flex items-center gap-[6px] h-[24px]">
            <Ic n="smile" s={18} /><Ic n="sad" s={18} /><div className="ml-[2px]"><Ic n="help" s={15} /></div>
          </div>
          <div className="flex items-center h-[24px] ml-[7px] text-[#333]">
            <div className="w-[6px] h-[2px] bg-[#333] mt-[5px] mr-[11px]" />
            <div className="w-[8px] h-[8px] border border-[#333] border-t-2 mr-[9px]" />
            <svg width="9" height="9" viewBox="0 0 9 9"><path d="M1 1L8 8M8 1L1 8" stroke="#333" strokeWidth="1.300" /></svg>
          </div>
        </div>
      </div>
    </div>
  );
}

const miniItems: { n: string; t: string; w: string; on?: boolean; off?: boolean; pl?: string }[] = [
  { n: 'tagSmart', t: '智慧尺寸', w: 'w-[74px]' },
  { n: 'undo', t: '復原', w: 'w-[50px]' },
  { n: 'handle', t: '關係手柄', w: 'w-[69px]' },
  { n: 'arrowSm', t: '選取', w: 'w-[47px]', on: true },
  { n: 'updSm', t: '更新視圖', w: 'w-[78px]', pl: 'pl-[6px]' },
  { n: 'bg', t: '背景', w: 'w-[49px]' },
  { n: 'leader', t: '標註', w: 'w-[49px]' },
  { n: 'props2', t: '編輯性質', w: 'w-[73px]' },
  { n: 'redo', t: '取消復原', w: 'w-[73px]', off: true },
  { n: 'saveV', t: '儲存(S)', w: 'w-[60px]' },
];

function MiniBar() {
  return (
    <div className="h-[21px] shrink-0 pl-[509px]">
      <div className="w-[635px] h-[21px] border border-[#e0e0e0] flex items-center text-[12px] text-[#222] bg-[#fafafa]">
        <div className="w-[8px] shrink-0 h-[16px] ml-[2px] [background-image:radial-gradient(#bbb_1px,transparent_1px)] [background-size:3px_3px]" />
        {miniItems.map(m => (
          <div key={m.t} className={`h-[19px] flex items-center gap-[1px] shrink-0 whitespace-nowrap pb-px ${m.w} ${m.pl ?? 'pl-[1px]'} ${m.on ? 'bg-[#c5d6ef] !pl-[5px]' : ''} ${m.off ? 'text-[#aaa]' : ''}`}>
            <Ic n={m.n} s={16} />{m.t}
          </div>
        ))}
      </div>
    </div>
  );
}

const Box = ({ plus }: { plus?: boolean }) => (
  <div className="w-[9px] h-[9px] border border-[#888] bg-[#f4f4f4] relative shrink-0">
    <div className="absolute left-px right-px top-[3px] h-px bg-[#335]" />
    {plus && <div className="absolute top-px bottom-px left-[3px] w-px bg-[#335]" />}
  </div>
);

const Dots = ({ w }: { w: string }) => <div className={`h-0 border-t border-dotted border-[#777] shrink-0 ${w}`} />;

function TreeRow({ pl, box, plus, icon, s = 16, h, text, sel, serif, wide }: { pl: string; box?: boolean; plus?: boolean; icon: string; s?: number; h?: number; text: string; sel?: boolean; serif?: boolean; wide?: boolean }) {
  return (
    <div className={`h-[16px] flex items-center ${pl}`}>
      {box ? <Box plus={plus} /> : <Dots w="w-[9px]" />}
      <Dots w="w-[7px]" />
      <Ic n={icon} s={s} h={h} />
      <span className={`ml-[3px] px-[2px] h-[15px] leading-[15px] whitespace-nowrap ${sel ? 'bg-[#0078d7] text-white font-semibold' : 'text-black'} ${serif ? "[font-family:'Liberation_Serif',serif]" : ''} ${wide ? 'tracking-[1px]' : ''}`}>{text}</span>
    </div>
  );
}

const Lb = ({ n, cls }: { n: string; cls: string }) => (
  <div className={`w-[22px] h-[22px] border border-[#bbb] bg-[#dfdfdf] flex items-center justify-center shrink-0 ${cls}`}><Ic n={n} s={18} /></div>
);

function LeftPanel() {
  return (
    <div className="w-[228px] shrink-0 border-r-2 border-[#d4d4d4] flex flex-col text-[12px]">
      <div className="h-[17px] flex items-center pl-[5px] shrink-0">
        <Ic n="layers" s={18} />
        <span className="ml-[5px] text-[#5f7aa8] leading-[16px]">圖層</span>
        <div className="ml-auto flex items-center mr-[10px] gap-[10px]">
          <svg width="11" height="9" viewBox="0 0 11 9"><path d="M0 0H11V2H0ZM0 3H11L5.500 9Z" fill="#333" /></svg>
          <svg width="8" height="12" viewBox="0 0 8 12"><path d="M2 0H6V6H8V7H4.500V12H3.500V7H0V6H2Z" fill="#444" /></svg>
          <svg width="10" height="10" viewBox="0 0 10 10"><path d="M1 1L9 9M9 1L1 9" stroke="#555" strokeWidth="1.300" /></svg>
        </div>
      </div>
      <div className="h-[27px] flex items-end bg-[#f0f0f0] border-b border-[#aaa] shrink-0 pl-px">
        <div className="w-[27px] h-[25px] flex items-center justify-center"><Ic n="tabPath" s={18} /></div>
        <div className="w-[28px] h-[25px] flex items-center justify-center bg-[#f8f8f8] border-x border-[#e0e0e0]"><Ic n="tabFeat" s={18} /></div>
        <div className="w-[29px] h-[27px] flex items-center justify-center bg-white border-t-2 border-[#2b579a]"><Ic n="layers" s={18} /></div>
        <div className="w-[30px] h-[25px] flex items-center justify-center bg-[#f8f8f8] border-r border-[#e0e0e0]"><Ic n="tabHelp" s={20} /></div>
      </div>
      <div className="h-[36px] flex items-center bg-[#f0f0f0] shrink-0">
        <Lb n="lay1" cls="ml-0" />
        <Lb n="lay2" cls="ml-[12px]" />
        <Lb n="lay3" cls="ml-[4px]" />
        <Lb n="lay4" cls="ml-[12px]" />
        <Lb n="lay5" cls="ml-[12px] bg-[#c4c4c4]" />
      </div>
      <div className="flex-1 relative border border-[#888] border-r-[#aaa] mr-[3px] pl-[7px] bg-white text-[12px]">
        <TreeRow pl="pl-0" box icon="sheet" text="Sheet1" serif />
        <TreeRow pl="pl-[19px]" box icon="layerNode" text="圖層" />
        <TreeRow pl="pl-[38px]" icon="pencil" text="預設設定" sel wide />
        <TreeRow pl="pl-[19px]" box icon="views" text="圖紙視圖" />
        <TreeRow pl="pl-[38px]" box plus icon="viewNode" text="主視圖" />
        <TreeRow pl="pl-[38px]" box plus icon="viewNode" text="主視圖" />
        <TreeRow pl="pl-[38px]" box plus icon="viewNode" text="主視圖" sel />
        <div className="absolute left-[30px] top-[13px] h-[41px] border-l border-dotted border-[#777]" />
        <div className="absolute left-[49px] top-[28px] h-[10px] border-l border-dotted border-[#777]" />
        <div className="absolute left-[49px] top-[62px] h-[32px] border-l border-dotted border-[#777]" />
      </div>
    </div>
  );
}

const Chev = () => (
  <svg width="9" height="5" viewBox="0 0 9 5" className="shrink-0"><path d="M0.500 0.500L4.500 4.500L8.500 0.500" fill="none" stroke="#444" /></svg>
);

const Btn = ({ n, cls = 'w-[32px]', s = 20 }: { n: string; cls?: string; s?: number }) => (
  <div className={`h-[27px] rounded-[2px] border border-[#b6c4d4] bg-gradient-to-b from-white to-[#dce9f5] flex items-center justify-center shrink-0 ${cls}`}><Ic n={n} s={s} /></div>
);

function CommandBar() {
  return (
    <div className="ml-[38px] w-[999px] h-[39px] mt-[2px] border border-[#2f3f55] rounded-[2px] flex items-center bg-white text-[12px] text-[#111] [font-family:'Liberation_Serif','Noto_Sans_CJK_TC',serif]">
      <div className="ml-[2px] w-[42px] h-[35px] rounded-[2px] border border-[#b87a20] bg-gradient-to-b from-[#f9b45c] via-[#f39a2c] to-[#fcc05e] flex items-center justify-center shrink-0">
        <svg width="20" height="30" viewBox="0 0 26 38"><path d="M2 1V31L9 24L14 36L20 33L15 22H25Z" fill="#eef0f2" stroke="#444" strokeWidth="1.500" /></svg>
      </div>
      <div className="ml-[8px] w-[105px] h-[19px] bg-[#e1e1e1] border border-[#bdbdbd] flex items-center pl-[3px] pr-[5px] shrink-0">
        <span>ISO (mm)</span><span className="ml-auto"><Chev /></span>
      </div>
      <span className="ml-[27px] w-[30px] shrink-0">標題:</span>
      <div className="w-[144px] h-[18px] border border-[#777] flex items-center pl-[3px] shrink-0 leading-[16px]">
        %VS%VR
        <div className="ml-auto w-[16px] h-[16px] mr-px bg-[#eeeeee] flex flex-col items-center justify-center gap-[3px]">
          <svg width="6" height="3" viewBox="0 0 6 3"><path d="M3 0L6 3H0Z" fill="#aaa" /></svg>
          <svg width="6" height="3" viewBox="0 0 6 3"><path d="M0 0H6L3 3Z" fill="#aaa" /></svg>
        </div>
      </div>
      <Btn n="title" cls="ml-[12px] w-[32px]" />
      <Btn n="vLayout" cls="ml-[6px] w-[32px]" />
      <Btn n="blueCube" cls="w-[31px]" />
      <span className="ml-[18px] w-[31px] shrink-0">比例:</span>
      <div className="w-[62px] h-[19px] bg-[#d8d8d8] border border-[#bdbdbd] flex items-center pl-[3px] pr-[5px] shrink-0 text-[#444]">
        <span>0.5:1</span><span className="ml-auto"><Chev /></span>
      </div>
      <span className="ml-[14px] w-[42px] shrink-0">比例值:</span>
      <div className="w-[45px] h-[18px] border border-[#777] pl-[3px] leading-[16px] shrink-0">0.50</div>
      <Btn n="gMove" cls="ml-[13px] w-[31px]" />
      <Btn n="gDial" cls="ml-[6px] w-[31px]" />
      <Btn n="gMag" cls="ml-[7px] w-[31px]" />
      <Btn n="handList" cls="ml-[7px] w-[32px]" />
      <Btn n="editBox" cls="ml-[5px] w-[32px]" />
      <Btn n="wire" cls="ml-[7px] w-[32px]" />
      <Btn n="wireG" cls="w-[31px]" />
      <Btn n="lock" cls="ml-[5px] w-[31px]" s={18} />
    </div>
  );
}

function DocTabs() {
  return (
    <div className="h-[30px] shrink-0 border-b-2 border-[#2b579a] flex items-end text-[12px] relative">
      <div className="w-px h-[23px] bg-[#ccc] ml-[2px] mb-[3px]" />
      <div className="w-[139px] h-[27px] flex items-center pl-[15px] gap-[5px] text-[#999] border-r border-[#ccc] mb-px">
        <Ic n="psm1" s={15} /><span>1.範例一.psm</span>
      </div>
      <div className="w-[119px] h-[27px] flex items-center pl-[15px] gap-[5px] text-[#999] mb-px">
        <Ic n="psm1" s={15} /><span>練習.psm</span>
      </div>
      <div className="w-[101px] h-[28px] relative top-[2px] flex items-center pl-[15px] bg-white border-x border-[#ccc] border-t-2 border-t-[#2b579a] text-[#2b6cb0]">
        <Ic n="draft" s={16} /><span className="ml-[3px]">Draft1</span>
        <svg width="9" height="9" viewBox="0 0 9 9" className="ml-auto mr-[3px]"><path d="M1 1L8 8M8 1L1 8" stroke="#2b6cb0" strokeWidth="1.300" /></svg>
      </div>
      <div className="ml-auto h-[28px] flex items-center gap-[7px] pr-[4px]">
        <svg width="6" height="9" viewBox="0 0 6 9"><path d="M5 .5L1 4.500L5 8.500Z" fill="none" stroke="#aaa" /></svg>
        <svg width="6" height="9" viewBox="0 0 6 9"><path d="M1 .5L5 4.500L1 8.500Z" fill="none" stroke="#aaa" /></svg>
        <Dd c="#777" />
        <svg width="12" height="12" viewBox="0 0 12 12"><path d="M1 1L11 11M11 1L1 11" stroke="#555" strokeWidth="1.200" /></svg>
      </div>
    </div>
  );
}

const handles: [number, number][] = [[378, 358], [846, 358], [1314, 358], [378, 561], [1314, 561], [378, 763], [846, 763], [1314, 763]];

// sheet-metal profile, traced as one open run of the two offset faces
const profile = 'M433.500 707.500 L429.500 696 L522 663 Q531 659 531 650 V436 Q531 410 556 410 H950 Q978 410 978 436 V686 Q978 700 990 700 H1108 Q1120 700 1120 688 V560 Q1120 531 1146 531 H1250 L1251 528 L1248 527 M1248 515 Q1262 516 1262 529 Q1262 543 1250 543 H1146 Q1132 543 1132 558 V688 Q1132 711 1108 711 H990 Q965 711 965 686 V436 Q965 422 950 422 H556 Q543 422 543 436 V650 Q543 666 530 671 L433.500 707.500';

function Canvas() {
  return (
    <div className="flex-1 min-h-0 bg-white">
      <svg viewBox="230 236 1126 629" className="block w-full h-full">
        <path d="M230 561.500H838" stroke="#000" strokeDasharray="8 4.500" />
        <rect x="377.500" y="358.500" width="937" height="405" fill="none" stroke="#ff00ff" />
        <path d="M377.500 358.500V763.500" stroke="#111" strokeDasharray="17 4" />
        <path d="M1314.500 358.500V763.500" stroke="#111" strokeDasharray="13 8" />
        <path d="M377.500 358.500H1314.500M377.500 763.500H1314.500" stroke="#111" strokeDasharray="6 24" />
        <path d={profile} fill="none" stroke="#ff00ff" strokeWidth="2" />
        <path d="M631 410V422" stroke="#ff00ff" strokeWidth="2" />
        <path d="M1227 515H1248V527H1227Z" fill="none" stroke="#ff00ff" strokeWidth="2" />
        {handles.map(([x, y]) => <circle key={`${x}-${y}`} cx={x} cy={y} r="3" fill="#8a8a8a" stroke="#222" />)}
      </svg>
    </div>
  );
}

function SheetTabs() {
  return (
    <div className="h-[16px] shrink-0 flex items-stretch bg-[#c0c0c0] border-t border-[#222] relative">
      <div className="flex items-center pl-px bg-[#e6e6e6] w-[66px] gap-px">
        {['M5 1V10M9 1V10L6 5.500Z', 'M8 1V10L3 5.500Z', 'M3 1V10L8 5.500Z', 'M3 1V10L7 5.500Z M9 1V10'].map(d => (
          <div key={d} className="w-[15px] h-[14px] bg-[#d8d8d8] border border-[#aaa] flex items-center justify-center">
            <svg width="12" height="11" viewBox="0 0 12 11"><path d={d} fill="#999" stroke="#888" /></svg>
          </div>
        ))}
      </div>
      <div className="w-[58px] relative -ml-px">
        <svg width="58" height="15" viewBox="0 0 58 15" className="absolute inset-0"><path d="M0 0L7 15H51L58 0" fill="#fff" stroke="#222" /></svg>
        <span className="absolute left-[11px] top-0 text-[12px] leading-[15px] font-bold tracking-[-0.5px] text-black [font-family:'Liberation_Sans',sans-serif]">Sheet 1</span>
      </div>
      <div className="w-[40px] relative ml-[1px]">
        <svg width="40" height="15" viewBox="0 0 40 15" className="absolute inset-0"><path d="M0 15L7 0H39L32 15Z" fill="#fcd8bc" stroke="#555" /></svg>
        <div className="absolute left-[10px] top-0"><svg width="15" height="14" viewBox="0 0 15 14"><path d="M3 2H14V13H3Z" fill="#fff" stroke="#1d3fc0" /><path d="M0 3l5-2M0 1l5 3M2.500 0V5" stroke={R} /><path d="M7 8h5v3H7z" fill="#dde" stroke="#1d3fc0" /></svg></div>
      </div>
    </div>
  );
}

function PromptBar() {
  return (
    <div className="h-[25px] shrink-0 flex items-center bg-[#f0f0f0] text-[12px]">
      <div className="ml-[5px]"><Ic n="keyb" s={20} /></div>
      <span className="ml-[6px] text-[#2f6fb8] w-[38px] shrink-0 whitespace-nowrap">提示列</span>
      <div className="ml-[2px] w-[938px] h-[22px] bg-white border-l border-t border-[#999] flex items-center pl-[2px] text-[#111] whitespace-nowrap overflow-hidden shrink-0 tracking-[0.85px]">
        點擊元素，向右拖曳以放入圍欄內，向左拖曳以放入圍欄內或與圍欄重疊，或按 Alt 並點擊以放置多邊形圍欄的第一個頂點，按 Esc 以清除顯示的關鍵點，
      </div>
      <div className="w-[15px] ml-[1px] flex flex-col items-center shrink-0 gap-[5px]">
        <svg width="7" height="6" viewBox="0 0 7 6"><path d="M.5 5L3.500 1L6.500 5" fill="none" stroke="#444" /></svg>
        <svg width="7" height="6" viewBox="0 0 7 6"><path d="M.5 1L3.500 5L6.500 1" fill="none" stroke="#444" /></svg>
      </div>
      <div className="flex items-center ml-[7px] gap-[3px] [font-family:'Liberation_Serif',serif] font-bold text-[#222]">
        <span className="text-[16px] leading-[18px]">A</span>
        <span className="ml-[2px] text-[12px] leading-[18px] mr-[4px]">A</span>
        <svg width="8" height="10" viewBox="0 0 8 10"><path d="M1 4L4 1L7 4M1 8L4 5L7 8" fill="none" stroke="#333" /></svg>
        <svg width="11" height="9" viewBox="0 0 11 9" className="ml-[2px]"><path d="M0 0H11V2H0ZM0 3H11L5.500 9Z" fill="#333" /></svg>
        <svg width="8" height="12" viewBox="0 0 8 12" className="ml-[6px]"><path d="M2 0H6V6H8V7H4.500V12H3.500V7H0V6H2Z" fill="#333" /></svg>
        <svg width="10" height="10" viewBox="0 0 10 10" className="ml-[6px]"><path d="M1 1L9 9M9 1L1 9" stroke="#333" strokeWidth="1.300" /></svg>
      </div>
    </div>
  );
}

function StatusBar() {
  return (
    <div className="h-[21px] shrink-0 bg-[#2b579a] flex items-start text-[12px] text-[#dce6f5] relative">
      <div className="ml-px w-[14px] h-[14px] bg-black shrink-0" />
      <span className="ml-[534px] mt-[2px] w-[286px] leading-[16px] whitespace-nowrap shrink-0">1 個項目已選定</span>
      <div className="w-[139px] h-[20px] mt-px bg-white text-[#aaa] pl-[2px] leading-[18px] shrink-0">搜尋指令</div>
      <div className="flex items-center h-[21px] ml-[3px]">
        <Ic n="share" s={18} />
        <div className="ml-[8px]"><Ic n="zoomF" s={16} /></div>
        <div className="ml-[7px]"><Ic n="zoomP" s={16} /></div>
        <div className="ml-[6px]"><Ic n="wand" s={16} /></div>
        <div className="ml-[6px]"><Ic n="fit" s={14} /></div>
        <div className="ml-[7px]"><Ic n="panH" s={16} /></div>
        <div className="ml-[9px] w-[12px] h-[12px] rounded-full bg-[#dfe7f2] flex items-center justify-center"><div className="w-[8px] h-[2px] bg-[#234]" /></div>
        <div className="w-[120px] h-px bg-white relative">
          <div className="absolute left-[73px] -top-[7px] w-[9px] h-[15px] bg-[#c5d6ef] border border-[#7f9fc8] rounded-b-[4px]" />
        </div>
        <div className="w-[12px] h-[12px] rounded-full bg-[#dfe7f2] flex items-center justify-center text-[#123] leading-[12px] font-bold">+</div>
        <div className="ml-[8px]"><Ic n="yt" s={16} /></div>
        <div className="ml-[9px]"><Ic n="rec" s={16} /></div>
        <div className="ml-[9px]"><Ic n="up" s={16} /></div>
        <div className="ml-[9px] w-[9px] h-[9px] mt-[6px] [background-image:radial-gradient(#ccd_1px,transparent_1px)] [background-size:3px_3px]" />
      </div>
    </div>
  );
}

export default function App() {
  return (
    <div className="w-[1356px] h-[927px] flex flex-col overflow-hidden bg-white border-t border-[#2b579a] [font-family:'Noto_Sans','Noto_Sans_CJK_TC',sans-serif]">
      <div className="flex-1 min-h-0 flex flex-col border-l-2 border-[#2b579a] relative">
        <Header />
        <Ribbon />
        <MiniBar />
        <div className="flex-1 min-h-0 flex">
          <LeftPanel />
          <div className="flex-1 min-w-0 flex flex-col">
            <DocTabs />
            <CommandBar />
            <Canvas />
            <SheetTabs />
            <PromptBar />
          </div>
        </div>
        {/* red highlight box round the update-view button */}
        <div className="absolute left-[206px] top-[47px] w-[67px] h-[93px] border-[3px] border-[#f04040] pointer-events-none" />
      </div>
      <StatusBar />
    </div>
  );
}
